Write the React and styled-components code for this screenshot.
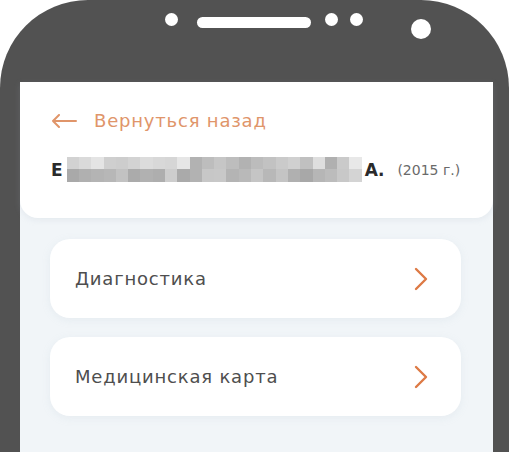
import styled, { createGlobalStyle } from "styled-components";

const GlobalStyle = createGlobalStyle`
  html, body {
    margin: 0;
    padding: 0;
    background: #ffffff;
    overflow: hidden;
  }
  body {
    font-family: "DejaVu Sans", "Noto Sans", sans-serif;
  }
`;

const TOP_ROW = [
  "#d2d2d2", "#dadada", "#e4e4e4", "#cfcfcf", "#cdcdcd", "#d3d3d3", "#dcdcdc", "#d8d8d8",
  "#d6d6d6", "#e6e6e6", "#b2b2b2", "#bdbdbd", "#c6c6c6", "#bdbdbd", "#b2b2b2", "#bcbcbc",
  "#c2c2c2", "#cacaca", "#d0d0d0", "#c0c0c0", "#dedede", "#b0b0b0", "#cacaca", "#e8e8e8",
];
const BOTTOM_ROW = [
  "#a9a9a9", "#b0b0b0", "#b4b4b4", "#b7b7b7", "#c2c2c2", "#ababab", "#b1b1b1", "#aeaeae",
  "#cdcdcd", "#aaaaaa", "#b2b2b2", "#c7c7c7", "#c8c8c8", "#b4b4b4", "#b9b9b9", "#c5c5c5",
  "#b8b8b8", "#c4c4c4", "#b0b0b0", "#a8a8a8", "#b6b6b6", "#bcbcbc", "#c8c8c8", "#d4d4d4",
];

const MENU = ["Диагностика", "Медицинская карта"];

const App = () => {
  return (
    <>
      <GlobalStyle />
      <Phone>
        <Bezel>
          <Dot />
          <Speaker />
          <Dot $left={-13} />
          <Dot $left={12} />
          <Camera />
        </Bezel>
        <Screen>
          <Header>
            <BackLink>
              <svg width="26" height="14" viewBox="0 0 26 14" fill="none">
                <path
                  d="M25 7H2M8 1L2 7l6 6"
                  stroke="#e0956a"
                  strokeWidth="2"
                  strokeLinecap="round"
                  strokeLinejoin="round"
                />
              </svg>
              <span>Вернуться назад</span>
            </BackLink>
            <NameRow>
              <Name>Е</Name>
              <Mosaic>
                {TOP_ROW.map((c, i) => (
                  <Cell key={"t" + i} $color={c} />
                ))}
                {BOTTOM_ROW.map((c, i) => (
                  <Cell key={"b" + i} $color={c} />
                ))}
              </Mosaic>
              <Name>А.</Name>
              <Year>(2015 г.)</Year>
            </NameRow>
          </Header>
          <Menu>
            {MENU.map((label) => (
              <MenuCard key={label}>
                <span>{label}</span>
                <svg width="14" height="24" viewBox="0 0 14 24" fill="none">
                  <path
                    d="M2 2l10 10L2 22"
                    stroke="#dd7a45"
                    strokeWidth="2.4"
                    strokeLinecap="round"
                    strokeLinejoin="round"
                  />
                </svg>
              </MenuCard>
            ))}
          </Menu>
        </Screen>
      </Phone>
    </>
  );
};
export default App;

const Phone = styled.div`
  width: 509px;
  height: 452px;
  background: #525252;
  border-radius: 88px 88px 0 0;
  display: flex;
  flex-direction: column;
  box-sizing: border-box;
`;

const Bezel = styled.div`
  height: 82px;
  flex-shrink: 0;
  display: flex;
  align-items: flex-start;
  padding: 13px 0 0 165px;
  box-sizing: border-box;
`;

const Dot = styled.div`
  width: 13px;
  height: 13px;
  border-radius: 50%;
  background: #ffffff;
  margin-left: ${({ $left }) => ($left ? `${$left}px` : "0")};
`;

const Speaker = styled.div`
  width: 114px;
  height: 11px;
  margin: 4px 0 0 19px;
  border-radius: 6px;
  background: #ffffff;
  margin-right: 27px;
`;

const Camera = styled.div`
  width: 20px;
  height: 20px;
  border-radius: 50%;
  background: #ffffff;
  margin: 6px 0 0 48px;
`;

const Screen = styled.div`
  flex: 1;
  margin: 0 16px 0 20px;
  background: #f1f5f8;
  display: flex;
  flex-direction: column;
`;

const Header = styled.div`
  height: 136px;
  box-sizing: border-box;
  background: #ffffff;
  border-radius: 0 0 18px 18px;
  box-shadow: 0 2px 6px rgba(170, 185, 200, 0.18);
  padding: 28px 0 0 31px;
  display: flex;
  flex-direction: column;
  gap: 25px;
`;

const BackLink = styled.div`
  display: flex;
  align-items: center;
  gap: 17px;
  color: #e0956a;
  font-size: 18px;
  line-height: 22px;
  letter-spacing: 0.8px;
`;

const NameRow = styled.div`
  display: flex;
  align-items: center;
`;

const Name = styled.span`
  font-weight: 700;
  font-size: 17px;
  color: #2a2a2a;
`;

const Mosaic = styled.div`
  display: grid;
  grid-template-columns: repeat(24, 12.3px);
  grid-template-rows: 12px 13px;
  margin: 0 3px 0 4px;
  filter: blur(0.4px);
`;

const Cell = styled.div`
  background: ${({ $color }) => $color};
`;

const Year = styled.span`
  font-size: 14px;
  color: #6a6a6a;
  margin-left: 13px;
`;

const Menu = styled.div`
  display: flex;
  flex-direction: column;
  gap: 19px;
  padding: 21px 32px 0 30px;
`;

const MenuCard = styled.div`
  height: 79px;
  box-sizing: border-box;
  background: #ffffff;
  border-radius: 20px;
  box-shadow: 0 2px 8px rgba(170, 185, 200, 0.15);
  padding: 0 33px 0 25px;
  display: flex;
  align-items: center;
  justify-content: space-between;
  color: #4e4e4e;
  font-size: 18px;
  letter-spacing: 0.8px;
`;
